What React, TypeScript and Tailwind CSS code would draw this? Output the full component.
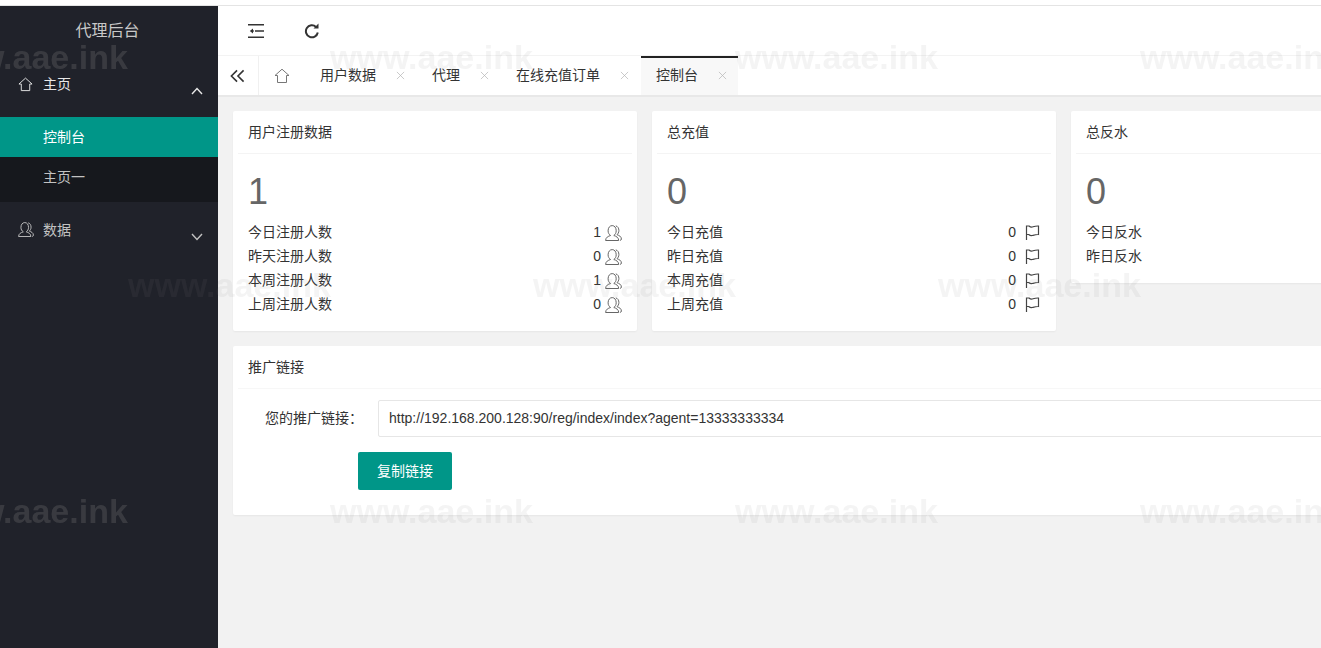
const UserIcon = ({ className = "" }: { className?: string }) => (
  <svg viewBox="0 0 17 16" fill="none" stroke="currentColor" strokeWidth="1" className={className}>
    <path d="M0.600 15.500c0-3 2.600-4.300 5-5-1.500-1-2.500-2.500-2.500-4.700C3.100 2.700 4.800.6 7.200.6s4 2.100 4 5.200c0 2.200-1 3.700-2.400 4.700 2.300.7 4.900 2 4.900 5H0.600z" />
    <path d="M10.800.9c1.900.4 3.100 2.300 3.100 4.600 0 1.800-.8 3.300-1.900 4.200 1.900.7 4.400 1.700 4.400 4.300 0 .8-.5 1.300-1.300 1.400" />
  </svg>
);

const FlagIcon = () => (
  <svg viewBox="0 0 15 15" fill="none" stroke="currentColor" strokeWidth="1.2" className="w-[15px] h-[15px] text-[#444]">
    <path d="M1.500 15V1h2.500c1.200 1 2.600 1.300 4 .8 1.500-.5 3.200-.9 5.500-.8v8.500c-2.300-.1-3.800.3-5.500.8-1.500.5-3.200.1-4.300-.8H1.500" />
  </svg>
);

const HomeIcon = ({ className = "" }: { className?: string }) => (
  <svg viewBox="0 0 16 16" fill="none" stroke="currentColor" strokeWidth="1" className={className}>
    <path d="M1 7.500L8 1.200l7 6.300h-2.500v7h-9v-7H1z" />
  </svg>
);

const Chevron = ({ up }: { up?: boolean }) => (
  <svg viewBox="0 0 12 8" fill="none" stroke="currentColor" strokeWidth="1.4" className="w-[12px] h-[8px]">
    <path d={up ? "M1 7l5-5.500L11 7" : "M1 1l5 5.500L11 1"} />
  </svg>
);

const Close = () => (
  <svg viewBox="0 0 10 10" stroke="currentColor" strokeWidth="0.8" className="w-[9px] h-[9px] text-[#b5b5b5]">
    <path d="M1 1l8 8M9 1l-8 8" />
  </svg>
);

const tabs = [
  { label: "用户数据" },
  { label: "代理" },
  { label: "在线充值订单" },
  { label: "控制台", active: true },
];

const cards = [
  {
    title: "用户注册数据",
    big: "1",
    icon: "user",
    h: "h-[220px]",
    rows: [
      ["今日注册人数", "1"],
      ["昨天注册人数", "0"],
      ["本周注册人数", "1"],
      ["上周注册人数", "0"],
    ],
  },
  {
    title: "总充值",
    big: "0",
    icon: "flag",
    h: "h-[220px]",
    rows: [
      ["今日充值", "0"],
      ["昨日充值", "0"],
      ["本周充值", "0"],
      ["上周充值", "0"],
    ],
  },
  {
    title: "总反水",
    big: "0",
    icon: "none",
    h: "h-[172px]",
    rows: [
      ["今日反水", ""],
      ["昨日反水", ""],
    ],
  },
];

const wmRows = [
  { top: "top-[37px]", left: "left-[-75px]", dark: true },
  { top: "top-[265px]", left: "left-[128px]", dark: false },
  { top: "top-[491px]", left: "left-[-75px]", dark: true },
];

export default function App() {
  return (
    <div className="relative w-[1321px] h-[648px] overflow-hidden bg-white font-['Liberation_Sans','Noto_Sans_CJK_SC',sans-serif] text-[14px] text-[#333]">
      <div className="h-[6px] border-b border-[#e4e4e4]" />
      <div className="flex h-[642px]">
        <aside className="w-[218px] shrink-0 bg-[#20222a] text-[#c2c2c2]">
          <div className="h-[49px] flex items-center justify-center pr-[3px] text-[16px] text-[#c8c8c8]">代理后台</div>
          <div className="relative h-[62px] flex items-start pt-[19px] pl-[18px] text-[#e8e8e8]">
            <HomeIcon className="w-[15px] h-[15px] mt-[3px]" />
            <span className="ml-[10px] leading-[20px]">主页</span>
            <span className="absolute left-[191px] top-[32px]"><Chevron up /></span>
          </div>
          <div className="h-[85px] bg-[#16181d]">
            <div className="h-[40px] bg-[#009688] text-white flex items-center pl-[43px]">控制台</div>
            <div className="h-[40px] flex items-center pl-[43px]">主页一</div>
          </div>
          <div className="relative h-[55px] flex items-start pt-[18px] pl-[18px]">
            <UserIcon className="w-[16px] h-[15px] mt-[2px]" />
            <span className="ml-[9px] leading-[20px]">数据</span>
            <span className="absolute left-[191px] top-[31px]"><Chevron /></span>
          </div>
        </aside>

        <main className="flex-1 min-w-0 flex flex-col bg-[#f2f2f2]">
          <div className="h-[49px] bg-white flex items-center pl-[30px] gap-[40px] text-[#333]">
            <svg viewBox="0 0 16 14" className="w-[16px] h-[14px]">
              <path d="M0 0h16v1.600H0zM7 6.200h9v1.600H7zM0 12.400h16V14H0z" fill="currentColor" />
              <path d="M5 4.400L1.800 7 5 9.600z" fill="currentColor" />
              <path d="M3 6.400h3v1.200H3z" fill="currentColor" />
            </svg>
            <svg viewBox="0 0 16 16" fill="none" stroke="currentColor" strokeWidth="2" className="w-[16px] h-[16px]">
              <path d="M13.800 9.500A6 6 0 1 1 12 3.900" />
              <path d="M14.500 .6v5h-5z" fill="currentColor" stroke="none" />
            </svg>
          </div>
          <div className="h-[42px] bg-white border-t border-[#f3f3f3] border-b-2 border-b-[#e8e8e8] flex">
            <div className="w-[41px] pr-[2px] flex items-center justify-center border-r border-[#f0f0f0] text-[#333]">
              <svg viewBox="0 0 16 14" fill="none" stroke="currentColor" strokeWidth="1.700" className="w-[15px] h-[14px]">
                <path d="M7.500 1L1.500 7l6 6M14.500 1l-6 6 6 6" />
              </svg>
            </div>
            <div className="w-[46px] flex items-center justify-center text-[#777]">
              <HomeIcon className="w-[16px] h-[16px]" />
            </div>
            {tabs.map((t) => (
              <div
                key={t.label}
                className={
                  "flex items-center pl-[15px] " +
                  (t.active ? "bg-[#f8f8f8] border-t-2 border-t-[#222] pr-[11px]" : "pr-[12px]")
                }
              >
                <span className={t.active ? "-mt-[2px]" : ""}>{t.label}</span>
                <span className={"ml-[20px] w-[9px] h-[9px] flex " + (t.active ? "-mt-[2px]" : "")}><Close /></span>
              </div>
            ))}
          </div>

          <div className="flex-1 pt-[14px] pl-[15px]">
            <div className="flex gap-[15px] items-start">
              {cards.map((c) => (
                <section key={c.title} className={"w-[404px] shrink-0 bg-white rounded-[2px] shadow-[0_1px_2px_rgba(0,0,0,0.05)] " + c.h}>
                  <div className="h-[43px] mx-[5px] border-b border-[#f4f4f4] flex items-center pl-[10px] text-[#333]">{c.title}</div>
                  <div className="px-[15px]">
                    <div className="h-[66px] pt-[14px] text-[36px] leading-[47px] text-[#666]">{c.big}</div>
                    {c.rows.map(([k, v]) => (
                      <div key={k} className="h-[24px] flex items-center">
                        <span className="flex-1 leading-[24px]">{k}</span>
                        {v && <span>{v}</span>}
                        {c.icon === "user" && <UserIcon className="w-[17px] h-[16px] ml-[4px] mt-[1px] text-[#666]" />}
                        {c.icon === "flag" && <span className="ml-[9px] mr-[1px] flex"><FlagIcon /></span>}
                      </div>
                    ))}
                  </div>
                </section>
              ))}
            </div>

            <section className="mt-[15px] w-[1120px] h-[169px] bg-white rounded-[2px] shadow-[0_1px_2px_rgba(0,0,0,0.05)]">
              <div className="h-[43px] mx-[5px] pl-[10px] border-b border-[#f7f7f7] flex items-center text-[#333]">
                <span>推广链接</span>
              </div>
              <div className="flex items-center mt-[11px] h-[37px]">
                <label className="w-[145px] pr-[15px] text-right text-[#333] whitespace-nowrap">您的推广链接：</label>
                <div className="flex-1 h-[37px] border border-[#e6e6e6] rounded-[2px] flex items-center pl-[10px] text-[14px] text-[#333]">
                  http://192.168.200.128:90/reg/index/index?agent=13333333334
                </div>
              </div>
              <button className="block mt-[15px] ml-[125px] w-[94px] h-[38px] rounded-[2px] bg-[#009688] text-white text-[14px]">复制链接</button>
            </section>
          </div>
        </main>
      </div>

      {wmRows.map((r) => (
        <div key={r.top} className={"absolute pointer-events-none flex gap-[200px] whitespace-nowrap text-[34px] leading-[40px] font-bold blur-[0.6px] " + r.top + " " + r.left}>
          {[0, 1, 2, 3].map((i) => (
            <span key={i} className={"w-[205px] shrink-0 " + (r.dark && i === 0 ? "text-[#8a8a8a]/[0.24]" : "text-[#8a8a8a]/[0.09]")}>www.aae.ink</span>
          ))}
        </div>
      ))}
    </div>
  );
}
